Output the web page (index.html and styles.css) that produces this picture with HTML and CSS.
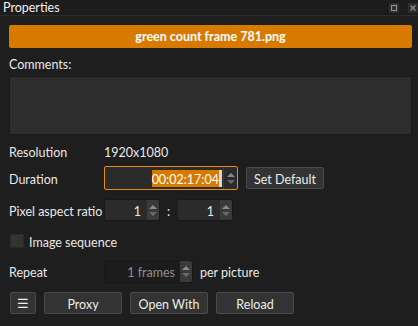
FILE: index.html
```html
<!DOCTYPE html>
<html lang="en">
<head>
    <meta charset="UTF-8">
    <title>Properties</title>
    <link rel="stylesheet" href="styles.css">
</head>
<body>
    <div class="dock">
        <div class="titlebar">
            <span class="title">Properties</span>
            <span class="dock-btns">
                <span class="dock-btn"><svg width="10" height="10" viewBox="0 0 10 10"><rect x="2.5" y="2.5" width="5" height="5" fill="none" stroke="#8c8c8c" stroke-width="1.2"/></svg></span>
                <span class="dock-btn"><svg width="10" height="10" viewBox="0 0 10 10"><path d="M2.5 2.5 L7.5 7.5 M7.5 2.5 L2.5 7.5" stroke="#8c8c8c" stroke-width="1.3"/></svg></span>
            </span>
        </div>

        <div class="panel">
            <div class="clip-name">green count frame 781.png</div>

            <div class="comments-label">Comments:</div>
            <div class="comments"></div>

            <div class="row row-res">
                <span class="label">Resolution</span>
                <span class="value">1920x1080</span>
            </div>

            <div class="row row-dur">
                <span class="label">Duration</span>
                <span class="spin spin-focus duration">
                    <span class="spin-text"><span class="sel">00:02:17:04</span><span class="caret"></span></span>
                    <span class="arrows split"><span class="up"></span><span class="down"></span></span>
                </span>
                <span class="btn btn-default">Set Default</span>
            </div>

            <div class="row row-par">
                <span class="label">Pixel aspect ratio</span>
                <span class="spin small">
                    <span class="spin-text">1</span>
                    <span class="arrows"><span class="up"></span><span class="down"></span></span>
                </span>
                <span class="colon">:</span>
                <span class="spin small">
                    <span class="spin-text">1</span>
                    <span class="arrows"><span class="up"></span><span class="down"></span></span>
                </span>
            </div>

            <div class="row row-seq">
                <span class="checkbox"></span>
                <span class="check-label">Image sequence</span>
            </div>

            <div class="row row-rep">
                <span class="label">Repeat</span>
                <span class="spin repeat disabled">
                    <span class="spin-text">1 frames</span>
                    <span class="arrows"><span class="up"></span><span class="down"></span></span>
                </span>
                <span class="per">per picture</span>
            </div>

            <div class="row row-btns">
                <span class="btn btn-menu">&#9776;</span>
                <span class="btn btn-wide">Proxy</span>
                <span class="btn btn-wide">Open With</span>
                <span class="btn btn-wide">Reload</span>
            </div>
        </div>
    </div>
</body>
</html>
```

FILE: styles.css
```css
body {
    margin: 0;
    background-color: #1e1e1e;
    font-family: Lato, "Open Sans", sans-serif;
    font-size: 12.5px;
    color: #e8e8e8;
    white-space: nowrap;
}

.dock {
    width: 418px;
    height: 326px;
    overflow: hidden;
}

.titlebar {
    height: 15px;
    border-bottom: 1px solid #2b2b2b;
    background-color: #1c1c1c;
    display: flex;
    align-items: center;
    justify-content: space-between;
}

.title {
    padding-left: 3px;
    line-height: 15px;
    color: #f0f0f0;
}

.dock-btns {
    display: flex;
    gap: 1px;
}

.dock-btn {
    width: 10px;
    height: 10px;
    margin-left: 8px;
    background-color: #2c2c2c;
    display: flex;
}

.panel {
    padding: 0 6px 0 9px;
}

.clip-name {
    margin-top: 9px;
    height: 23px;
    background-color: #d87a00;
    border-radius: 2px;
    color: #fff;
    font-weight: bold;
    text-align: center;
    line-height: 24px;
}

.comments-label {
    margin-top: 7px;
    height: 19px;
    line-height: 19px;
}

.comments {
    margin-top: 2px;
    height: 57px;
    background-color: #2d2d2d;
    border: 1px solid #191919;
}

.row {
    display: flex;
    align-items: center;
}

/* Lato sits a bit high, nudge the text down */
.label,
.value,
.check-label,
.per,
.btn,
.spin-text {
    padding-top: 2px;
}

.label {
    width: 95px;
    flex: none;
}

.row-res {
    height: 18px;
    margin-top: 7px;
}

.row-dur {
    margin-top: 6px;
    height: 24px;
}

.row-par {
    margin-top: 9px;
    height: 22px;
}

.row-seq {
    margin-top: 13px;
    height: 14px;
}

.row-rep {
    margin-top: 12px;
    height: 23px;
}

.row-btns {
    margin-top: 9px;
    height: 22px;
    gap: 8px;
}

.spin {
    display: flex;
    height: 100%;
    box-sizing: border-box;
    background-color: #2b2b2b;
    border: 1px solid #191919;
    border-radius: 2px;
}

.spin-text {
    flex: 1;
    display: flex;
    align-items: center;
    justify-content: flex-end;
    padding-right: 3px;
}

.spin .arrows {
    width: 12px;
    background-color: #3a3a3a;
    border-radius: 0 2px 2px 0;
    display: flex;
    flex-direction: column;
    align-items: center;
    justify-content: center;
    gap: 3px;
}

.arrows .up {
    width: 0;
    height: 0;
    border-left: 4px solid transparent;
    border-right: 4px solid transparent;
    border-bottom: 4px solid #8a8a8a;
}

.arrows .down {
    width: 0;
    height: 0;
    border-left: 4px solid transparent;
    border-right: 4px solid transparent;
    border-top: 4px solid #6a6a6a;
}

.duration {
    width: 134px;
}

.spin-focus {
    border-color: #e8891c;
}

.spin-focus .arrows {
    background-color: #2b2b2b;
    border-left: 1px solid #3d3d3d;
    width: 13px;
}

.duration .spin-text {
    padding-top: 0;
    padding-right: 1px;
}

.sel {
    background-color: #d87a00;
    color: #fff;
    height: 17px;
    line-height: 19px;
}

.caret {
    width: 3px;
    height: 17px;
    background-color: #d8d8d8;
}

.btn {
    display: flex;
    align-items: center;
    justify-content: center;
    box-sizing: border-box;
    background-color: #333333;
    border: 1px solid #4a4a4a;
    border-radius: 2px;
    color: #ececec;
}

.btn-default {
    margin-left: 8px;
    width: 78px;
    height: 22px;
}

.small {
    width: 56px;
}

.small .spin-text {
    padding-right: 6px;
}

.colon {
    width: 17px;
    text-align: center;
    padding-top: 2px;
}

.checkbox {
    width: 12px;
    height: 12px;
    margin-left: 1px;
    background-color: #333333;
    border: 1px solid #2a2a2a;
}

.check-label {
    margin-left: 5px;
}

.repeat {
    width: 89px;
}

.disabled {
    background-color: #1c1c1c;
    border-color: #181818;
    color: #8e8e8e;
}

.disabled .spin-text {
    padding-right: 5px;
}

.per {
    margin-left: 7px;
}

.btn-menu {
    width: 26px;
    height: 22px;
    margin-left: 1px;
    font-size: 13px;
    padding-top: 0;
}

.btn-wide {
    width: 78px;
    height: 22px;
}
```
